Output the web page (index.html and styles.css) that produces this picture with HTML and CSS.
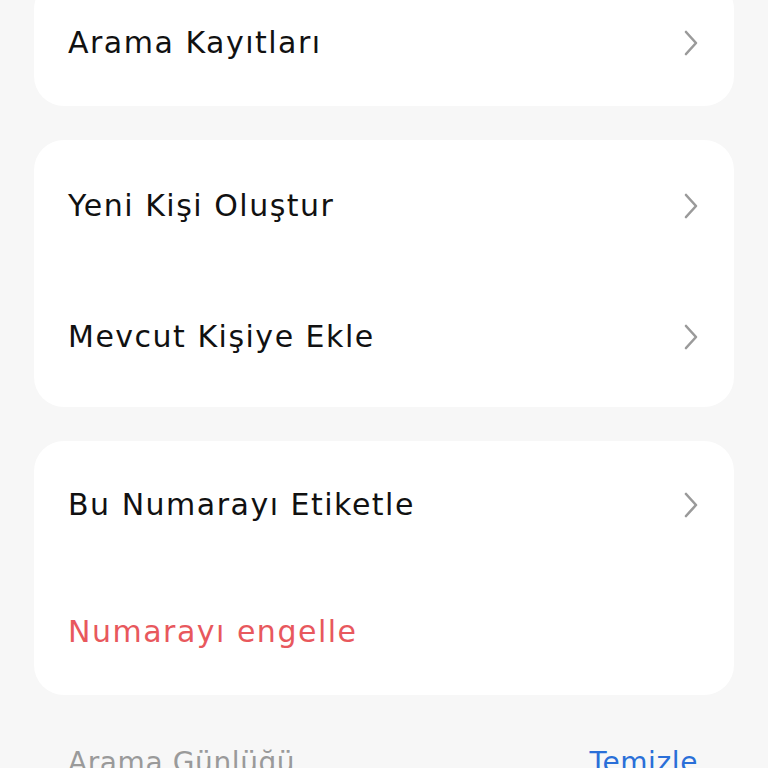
FILE: index.html
```html
<!DOCTYPE html>
<html lang="tr">
<head>
<meta charset="utf-8">
<link rel="stylesheet" href="styles.css">
</head>
<body>
<div class="page">
  <div class="card card-first">
    <div class="row row-a"><span class="label">Arama Kayıtları</span><svg class="chev" viewBox="0 0 14 26"><path d="M2 2 L12 13 L2 24"/></svg></div>
  </div>
  <div class="card card-two">
    <div class="row row-b"><span class="label">Yeni Kişi Oluştur</span><svg class="chev" viewBox="0 0 14 26"><path d="M2 2 L12 13 L2 24"/></svg></div>
    <div class="row row-b"><span class="label">Mevcut Kişiye Ekle</span><svg class="chev" viewBox="0 0 14 26"><path d="M2 2 L12 13 L2 24"/></svg></div>
  </div>
  <div class="card">
    <div class="row row-c"><span class="label">Bu Numarayı Etiketle</span><svg class="chev" viewBox="0 0 14 26"><path d="M2 2 L12 13 L2 24"/></svg></div>
    <div class="row row-c"><span class="label danger">Numarayı engelle</span></div>
  </div>
  <div class="section-head">
    <span class="section-title">Arama Günlüğü</span>
    <span class="section-action">Temizle</span>
  </div>
</div>
</body>
</html>
```

FILE: styles.css
```css
html, body {
  margin: 0;
  padding: 0;
  background: #f7f7f7;
  overflow: hidden;
}
body {
  font-family: "DejaVu Sans", "Noto Sans", sans-serif;
  width: 768px;
  height: 768px;
}
.page {
  display: flex;
  flex-direction: column;
  gap: 34px;
  padding: 0 34px;
  margin-top: -21px;
}
.card {
  background: #ffffff;
  border-radius: 30px;
  display: flex;
  flex-direction: column;
}
.card-two {
  padding-bottom: 5px;
}
.row {
  display: flex;
  align-items: center;
  justify-content: space-between;
  padding: 0 36px 0 34px;
}
.row-a { height: 127px; }
.row-b { height: 131px; }
.row-c { height: 127px; }
.label {
  font-size: 30px;
  line-height: 36px;
  color: #111111;
  letter-spacing: 1.5px;
}
.danger {
  color: #e8585d;
}
.chev {
  width: 14px;
  height: 26px;
  fill: none;
  stroke: #9a9a9a;
  stroke-width: 2.6;
  stroke-linecap: round;
  stroke-linejoin: round;
}
.section-head {
  display: flex;
  justify-content: space-between;
  align-items: flex-start;
  padding: 17px 36px 0 34px;
}
.section-title {
  font-size: 28px;
  line-height: 34px;
  color: #9a9a9a;
  letter-spacing: 0.6px;
}
.section-action {
  font-size: 28px;
  line-height: 34px;
  color: #2a6fd8;
  letter-spacing: 0.6px;
}
```
